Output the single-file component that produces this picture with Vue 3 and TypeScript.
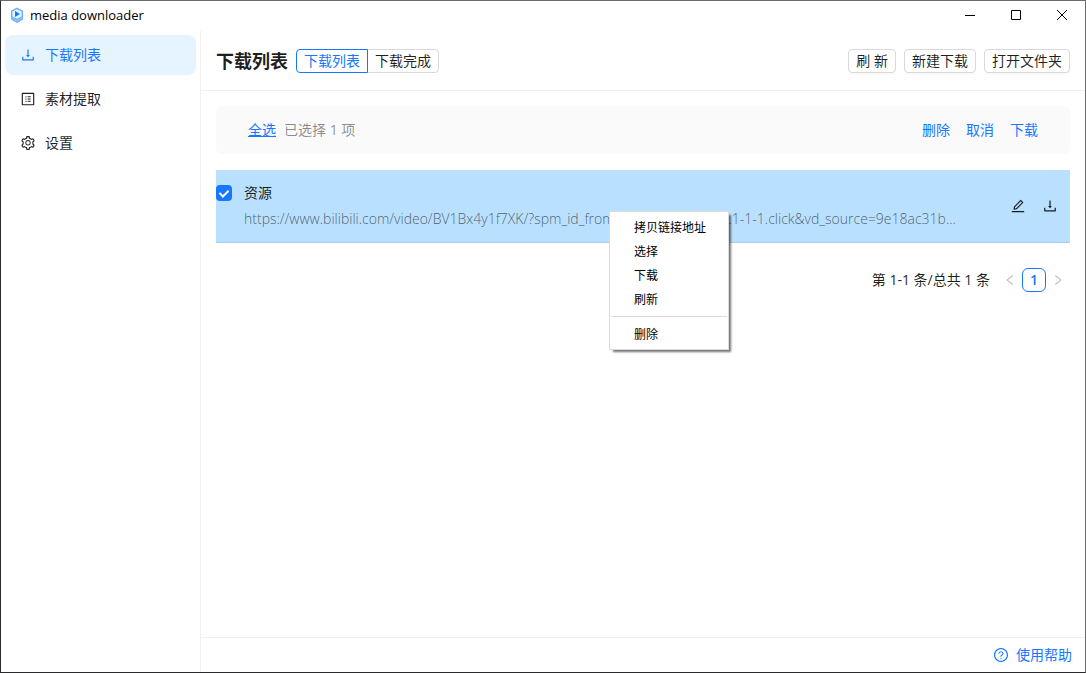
<script setup lang="ts">
import { ref } from 'vue'

interface NavItem {
  label: string
  icon: string
}

const icons: Record<string, string> = {
  download:
    'M505.7 661a8 8 0 0012.6 0l112-141.7c4.1-5.2.4-12.9-6.3-12.9h-74.1V168c0-4.4-3.6-8-8-8h-60c-4.4 0-8 3.6-8 8v338.3H400c-6.7 0-10.4 7.7-6.3 12.9l112 141.8zM878 626h-60c-4.4 0-8 3.6-8 8v154H214V634c0-4.4-3.6-8-8-8h-60c-4.4 0-8 3.6-8 8v198c0 17.7 14.3 32 32 32h684c17.7 0 32-14.3 32-32V634c0-4.4-3.6-8-8-8z',
  profile:
    'M880 112H144c-17.7 0-32 14.3-32 32v736c0 17.7 14.3 32 32 32h736c17.7 0 32-14.3 32-32V144c0-17.7-14.3-32-32-32zm-40 728H184V184h656v656zM492 400h184c4.4 0 8-3.6 8-8v-48c0-4.4-3.6-8-8-8H492c-4.4 0-8 3.6-8 8v48c0 4.4 3.6 8 8 8zm0 144h184c4.4 0 8-3.6 8-8v-48c0-4.4-3.6-8-8-8H492c-4.4 0-8 3.6-8 8v48c0 4.4 3.6 8 8 8zm0 144h184c4.4 0 8-3.6 8-8v-48c0-4.4-3.6-8-8-8H492c-4.4 0-8 3.6-8 8v48c0 4.4 3.6 8 8 8zM340 368a40 40 0 1080 0 40 40 0 10-80 0zm0 144a40 40 0 1080 0 40 40 0 10-80 0zm0 144a40 40 0 1080 0 40 40 0 10-80 0z',
  setting:
    'M924.8 625.7l-65.5-56c3.1-19 4.7-38.4 4.7-57.8s-1.6-38.8-4.7-57.8l65.5-56a32.03 32.03 0 009.3-35.2l-.9-2.6a443.74 443.74 0 00-79.7-137.9l-1.8-2.1a32.12 32.12 0 00-35.1-9.5l-81.3 28.9c-30-24.6-63.5-44-99.7-57.6l-15.7-85a32.05 32.05 0 00-25.8-25.7l-2.7-.5c-52.1-9.4-106.9-9.4-159 0l-2.7.5a32.05 32.05 0 00-25.8 25.7l-15.8 85.4a351.86 351.86 0 00-99 57.4l-81.9-29.1a32 32 0 00-35.1 9.5l-1.8 2.1a446.02 446.02 0 00-79.7 137.9l-.9 2.6c-4.5 12.5-.8 26.5 9.3 35.2l66.3 56.6c-3.1 18.8-4.6 38-4.6 57.1 0 19.2 1.5 38.4 4.6 57.1L99 625.5a32.03 32.03 0 00-9.3 35.2l.9 2.6c18.1 50.4 44.9 96.9 79.7 137.9l1.8 2.1a32.12 32.12 0 0035.1 9.5l81.9-29.1c29.8 24.5 63.1 43.9 99 57.4l15.8 85.4a32.05 32.05 0 0025.8 25.7l2.7.5a449.4 449.4 0 00159 0l2.7-.5a32.05 32.05 0 0025.8-25.7l15.7-85a350 350 0 0099.7-57.6l81.3 28.9a32 32 0 0035.1-9.5l1.8-2.1c34.8-41.1 61.6-87.5 79.7-137.9l.9-2.6c4.5-12.3.8-26.3-9.3-35zM788.3 465.9c2.5 15.1 3.8 30.6 3.8 46.1s-1.3 31-3.8 46.1l-6.6 40.1 74.7 63.9a370.03 370.03 0 01-42.6 73.6L721 702.8l-31.4 25.8c-23.9 19.6-50.5 35-79.3 45.8l-38.1 14.3-17.9 97a377.5 377.5 0 01-85 0l-17.9-97.2-37.8-14.5c-28.5-10.8-55-26.2-78.7-45.7l-31.4-25.9-93.4 33.2c-17-22.9-31.2-47.6-42.6-73.6l75.5-64.5-6.5-40c-2.4-14.9-3.7-30.3-3.7-45.5 0-15.3 1.2-30.6 3.7-45.5l6.5-40-75.5-64.5c11.3-26.1 25.6-50.7 42.6-73.6l93.4 33.2 31.4-25.9c23.7-19.5 50.2-34.9 78.7-45.7l37.9-14.3 17.9-97.2c28.1-3.2 56.8-3.2 85 0l17.9 97 38.1 14.3c28.7 10.8 55.4 26.2 79.3 45.8l31.4 25.8 92.8-32.9c17 22.9 31.2 47.6 42.6 73.6L781.8 426l6.5 39.9zM512 326c-97.2 0-176 78.8-176 176s78.8 176 176 176 176-78.8 176-176-78.8-176-176-176zm79.2 255.2A111.6 111.6 0 01512 614c-29.9 0-58-11.7-79.2-32.8A111.6 111.6 0 01400 502c0-29.9 11.7-58 32.8-79.2C454 401.6 482.1 390 512 390c29.9 0 58 11.6 79.2 32.8A111.6 111.6 0 01624 502c0 29.9-11.7 58-32.8 79.2z',
  edit:
    'M257.7 752c2 0 4-.2 6-.5L431.9 722c2-.4 3.9-1.3 5.3-2.8l423.9-423.9a9.96 9.96 0 000-14.1L694.9 114.9c-1.9-1.9-4.4-2.9-7.1-2.9s-5.2 1-7.1 2.9L256.8 538.8c-1.5 1.5-2.4 3.3-2.8 5.3l-29.5 168.2a33.5 33.5 0 009.4 29.8c6.6 6.4 14.9 9.9 23.8 9.9zm67.4-174.4L687.8 215l73.3 73.3-362.7 362.6-88.9 15.7 15.6-89zM880 836H144c-17.7 0-32 14.3-32 32v36c0 4.4 3.6 8 8 8h784c4.4 0 8-3.6 8-8v-36c0-17.7-14.3-32-32-32z',
  question:
    'M512 64C264.6 64 64 264.6 64 512s200.6 448 448 448 448-200.6 448-448S759.4 64 512 64zm0 820c-205.4 0-372-166.6-372-372s166.6-372 372-372 372 166.6 372 372-166.6 372-372 372zM623.6 316.7C593.6 290.4 554 276 512 276s-81.6 14.5-111.6 40.7C369.2 344 352 380.7 352 420v7.6c0 4.4 3.6 8 8 8h48c4.4 0 8-3.6 8-8V420c0-44.1 43.1-80 96-80s96 35.9 96 80c0 31.1-22 59.6-56.1 72.7-21.2 8.1-39.2 22.3-52.1 40.9-13.1 19-19.9 41.8-19.9 64.9V620c0 4.4 3.6 8 8 8h48c4.4 0 8-3.6 8-8v-22.7a48.3 48.3 0 0130.9-44.8c59-22.7 97.1-74.7 97.1-132.5.1-39.3-17.1-76-48.3-103.3zM472 732a40 40 0 1080 0 40 40 0 10-80 0z',
  left:
    'M724 218.3V141c0-6.7-7.7-10.4-12.9-6.3L260.3 486.8a31.86 31.86 0 000 50.3l450.8 352.1c5.3 4.1 12.9.4 12.9-6.3v-77.3c0-4.9-2.3-9.6-6.1-12.6l-360-281 360-281.1c3.8-3 6.1-7.7 6.1-12.6z',
  right:
    'M765.7 486.8L314.9 134.7A7.97 7.97 0 00302 141v77.3c0 4.9 2.3 9.6 6.1 12.6l360 281.1-360 281.1c-3.9 3-6.1 7.7-6.1 12.6V883c0 6.7 7.7 10.4 12.9 6.3l450.8-352.1a31.96 31.96 0 000-50.4z',
}

const navItems: NavItem[] = [
  { label: '下载列表', icon: 'download' },
  { label: '素材提取', icon: 'profile' },
  { label: '设置', icon: 'setting' },
]
const activeNav = ref('下载列表')

const filters = ['下载列表', '下载完成']
const filter = ref('下载列表')

const toolbar = ['刷 新', '新建下载', '打开文件夹']
const batchActions = ['删除', '取消', '下载']
const menuItems = ['拷贝链接地址', '选择', '下载', '刷新']
const checked = ref(true)
const url =
  'https://www.bilibili.com/video/BV1Bx4y1f7XK/?spm_id_from=333.1007.tianma.1-1-1.click&vd_source=9e18ac31b...'
</script>

<template>
  <div class="window">
    <header class="titlebar">
      <svg class="logo" viewBox="0 0 14 16" aria-hidden="true">
        <path d="M1 10v2.500L7 16l6-3.500V10L7 13.500z" fill="#69b1ff" />
        <path d="M1 9v1.800l6 3.400 6-3.400V9l-6 3.500z" fill="#b5d8fd" />
        <path d="M7 1.300l5.300 2.900v5.600L7 12.700 1.700 9.800V4.200z" fill="#e6f4ff" stroke="#69b1ff" stroke-width="1.400" />
        <path d="M5 4l5 3-5 3z" fill="#1677ff" />
      </svg>
      <span class="app-name">media downloader</span>
      <div class="window-controls">
        <button type="button" aria-label="最小化">
          <svg viewBox="0 0 12 12"><path d="M1 6.500h10" /></svg>
        </button>
        <button type="button" aria-label="最大化">
          <svg viewBox="0 0 12 12"><path d="M1.500 1.500h9v9h-9z" /></svg>
        </button>
        <button type="button" aria-label="关闭">
          <svg viewBox="0 0 12 12"><path d="M1 1l10 10M11 1L1 11" /></svg>
        </button>
      </div>
    </header>

    <div class="body">
      <nav class="sidebar">
        <button
          v-for="item in navItems"
          :key="item.label"
          type="button"
          class="nav-item"
          :class="{ active: item.label === activeNav }"
          @click="activeNav = item.label"
        >
          <svg class="icon" viewBox="0 0 1024 1024"><path :d="icons[item.icon]" /></svg>
          <span>{{ item.label }}</span>
        </button>
      </nav>

      <div class="content">
        <div class="page-header">
          <h1>下载列表</h1>
          <div class="segmented" role="radiogroup" aria-label="列表">
            <label v-for="name in filters" :key="name" :class="{ on: name === filter }">
              <input v-model="filter" type="radio" name="filter" :value="name" />{{ name }}
            </label>
          </div>
          <div class="toolbar">
            <button v-for="name in toolbar" :key="name" type="button" class="btn">{{ name }}</button>
          </div>
        </div>

        <main class="main">
          <div class="alert">
            <button type="button" class="link underlined">全选</button>
            <span class="count">已选择 1 项</span>
            <div class="batch">
              <button v-for="name in batchActions" :key="name" type="button" class="link">{{ name }}</button>
            </div>
          </div>

          <ul class="list">
            <li class="row">
              <input id="res" v-model="checked" type="checkbox" class="check" />
              <div class="info">
                <label for="res" class="name">资源</label>
                <div class="url">{{ url }}</div>
              </div>
              <div class="row-actions">
                <button type="button" aria-label="编辑">
                  <svg class="icon" viewBox="0 0 1024 1024"><path :d="icons.edit" /></svg>
                </button>
                <button type="button" aria-label="下载">
                  <svg class="icon" viewBox="0 0 1024 1024"><path :d="icons.download" /></svg>
                </button>
              </div>
            </li>
          </ul>

          <div class="pagination">
            <span class="total">第 1-1 条/总共 1 条</span>
            <button type="button" class="arrow" aria-label="上一页" disabled>
              <svg viewBox="0 0 1024 1024"><path :d="icons.left" /></svg>
            </button>
            <button type="button" class="page">1</button>
            <button type="button" class="arrow" aria-label="下一页" disabled>
              <svg viewBox="0 0 1024 1024"><path :d="icons.right" /></svg>
            </button>
          </div>
        </main>

        <footer class="footer">
          <a href="#" class="help">
            <svg class="icon" viewBox="0 0 1024 1024"><path :d="icons.question" /></svg>
            <span>使用帮助</span>
          </a>
        </footer>
      </div>
    </div>

    <div class="context-menu" role="menu">
      <button v-for="name in menuItems" :key="name" type="button" role="menuitem">{{ name }}</button>
      <hr />
      <button type="button" role="menuitem">删除</button>
    </div>
  </div>
</template>

<style>
body {
  margin: 0;
}
</style>

<style scoped>
.window {
  position: relative;
  box-sizing: border-box;
  display: flex;
  flex-direction: column;
  min-height: 100vh;
  border: 1px solid #6b6b6b;
  border-left-color: #2c2c2e;
  border-bottom-color: #2a2a2c;
  background: #fff;
  color: rgba(0, 0, 0, 0.88);
  font-family: 'Open Sans', 'Noto Sans CJK SC', sans-serif;
  font-size: 14px;
  line-height: 22px;
}

button {
  margin: 0;
  padding: 0;
  border: 0;
  background: none;
  color: inherit;
  font: inherit;
  cursor: pointer;
}

.icon {
  display: block;
  width: 16px;
  height: 16px;
  fill: currentColor;
}

.titlebar {
  display: flex;
  align-items: center;
  box-sizing: border-box;
  height: 30px;
  padding: 0 0 2px 9px;
  color: #000;
}

.logo {
  width: 14px;
  height: 16px;
}

.app-name {
  margin-left: 6px;
  font-size: 13px;
}

.window-controls {
  display: flex;
  align-self: stretch;
  margin-left: auto;
}

.window-controls button {
  display: flex;
  align-items: center;
  justify-content: center;
  width: 46px;
}

.window-controls svg {
  width: 12px;
  height: 12px;
  fill: none;
  stroke: #000;
  stroke-width: 1;
}

.body {
  display: flex;
  flex: 1;
}

.sidebar {
  display: flex;
  flex-direction: column;
  gap: 4px;
  box-sizing: border-box;
  width: 200px;
  padding: 4px;
  border-right: 1px solid #f0f0f0;
}

.nav-item {
  display: flex;
  align-items: center;
  gap: 9px;
  height: 40px;
  padding: 0 15px;
  border-radius: 8px;
}

.nav-item.active {
  background: #e6f4ff;
  color: #1677ff;
}

.content {
  display: flex;
  flex: 1;
  flex-direction: column;
  min-width: 0;
}

.page-header {
  display: flex;
  align-items: center;
  height: 59px;
  padding: 0 15px;
  border-bottom: 1px solid #f0f0f0;
}

h1 {
  margin: 0 8px 0 0;
  font-size: 18px;
  font-weight: 700;
  line-height: 24px;
}

.segmented {
  display: flex;
}

.segmented label {
  position: relative;
  padding: 0 7px;
  border: 1px solid #d9d9d9;
  cursor: pointer;
}

.segmented label:first-child {
  border-radius: 4px 0 0 4px;
}

.segmented label:last-child {
  margin-left: -1px;
  border-radius: 0 4px 4px 0;
}

.segmented label.on {
  z-index: 1;
  border-color: #1677ff;
  color: #1677ff;
}

.segmented input {
  position: absolute;
  opacity: 0;
  pointer-events: none;
}

.toolbar {
  display: flex;
  gap: 8px;
  margin-left: auto;
}

.btn {
  padding: 0 7px;
  border: 1px solid #d9d9d9;
  border-radius: 4px;
  background: #fff;
  box-shadow: 0 2px 0 rgba(0, 0, 0, 0.02);
}

.main {
  flex: 1;
  padding: 15px;
}

.alert {
  display: flex;
  align-items: center;
  gap: 8px;
  height: 48px;
  padding: 0 32px;
  border-radius: 6px;
  background: #fafafa;
}

.count {
  color: rgba(0, 0, 0, 0.45);
}

.link {
  color: #1677ff;
}

.underlined {
  text-decoration: underline;
}

.batch {
  display: flex;
  gap: 16px;
  margin-left: auto;
}

.list {
  margin: 16px 0 0;
  padding: 0;
  list-style: none;
}

.row {
  display: flex;
  align-items: center;
  height: 72px;
  border-bottom: 1px solid #a9cdee;
  background: #bae0ff;
}

.check {
  position: relative;
  align-self: flex-start;
  flex: none;
  width: 16px;
  height: 16px;
  margin: 15px 12px 0 0;
  border-radius: 4px;
  background: #fff;
  appearance: none;
}

.check:checked {
  background: #1677ff;
}

.check:checked::after {
  position: absolute;
  top: 3px;
  left: 5px;
  width: 4px;
  height: 7px;
  border: solid #fff;
  border-width: 0 2px 2px 0;
  content: '';
  transform: rotate(45deg);
}

.info {
  flex: 1;
  min-width: 0;
}

.name {
  display: block;
  margin-bottom: 4px;
}

.url {
  overflow: hidden;
  color: rgba(0, 0, 0, 0.6);
  font-weight: 300;
  text-overflow: ellipsis;
  white-space: nowrap;
}

.row-actions {
  display: flex;
  gap: 8px;
  padding-right: 8px;
}

.row-actions button {
  display: flex;
  align-items: center;
  justify-content: center;
  width: 24px;
  height: 24px;
}

.pagination {
  display: flex;
  align-items: center;
  justify-content: flex-end;
  margin-top: 25px;
}

.total {
  margin-right: 8px;
}

.arrow {
  display: flex;
  align-items: center;
  justify-content: center;
  width: 24px;
  height: 24px;
}

.arrow svg {
  width: 14px;
  height: 14px;
  fill: rgba(0, 0, 0, 0.25);
}

.page {
  width: 24px;
  height: 24px;
  border: 1px solid #1677ff;
  border-radius: 6px;
  color: #1677ff;
  font-weight: 600;
}

.footer {
  display: flex;
  align-items: center;
  justify-content: flex-end;
  height: 34px;
  padding-right: 13px;
  border-top: 1px solid #f0f0f0;
}

.help {
  display: flex;
  align-items: center;
  gap: 7px;
  color: #1677ff;
  text-decoration: none;
}

.context-menu {
  position: absolute;
  top: 210px;
  left: 608px;
  display: flex;
  flex-direction: column;
  box-sizing: border-box;
  width: 120px;
  padding: 4px 1px 2px;
  border: 1px solid #dcdcdc;
  background: #fff;
  box-shadow: 3px 3px 2px -1px rgba(0, 0, 0, 0.55);
  color: #000;
  font-size: 12px;
  line-height: 24px;
  white-space: nowrap;
}

.context-menu button {
  padding: 0 22px 0 23px;
  text-align: left;
}

.context-menu hr {
  width: 100%;
  height: 1px;
  margin: 4px 0 6px;
  border: 0;
  background: #dcdcdc;
}
</style>
